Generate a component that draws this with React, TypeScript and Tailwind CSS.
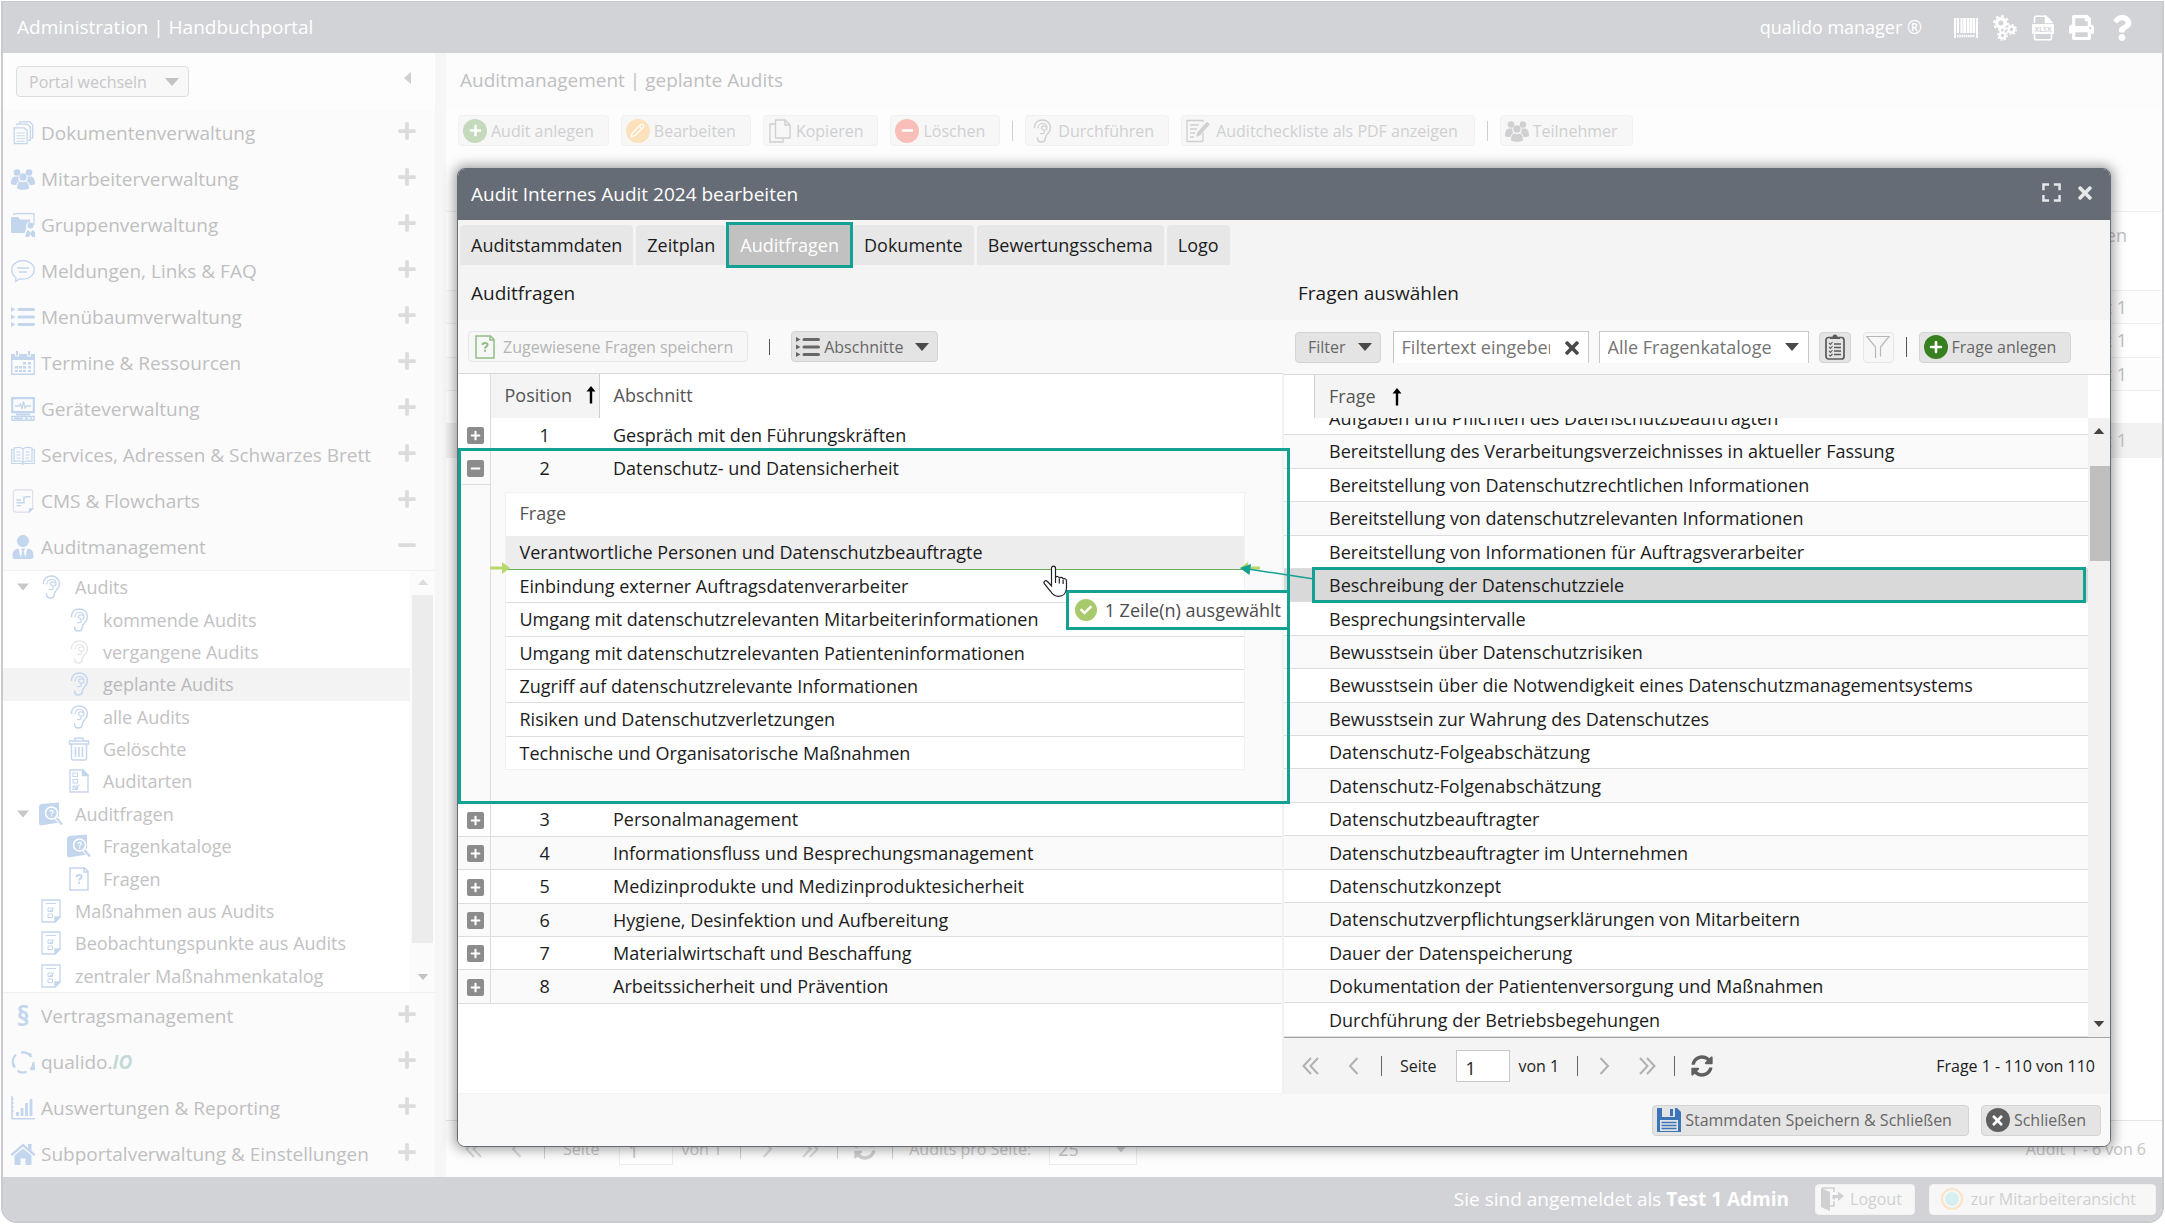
import React from 'react';
import { Pencil } from 'lucide-react';
import { FaUserTie, FaPrint, FaQuestion, FaPlus, FaMinus, FaTimes, FaCheck, FaSyncAlt } from 'react-icons/fa';

type IconProps = { className?: string };

const DocsIcon = ({ className }: IconProps) => (
  <svg viewBox="0 0 24 26" fill="none" stroke="currentColor" strokeWidth="1.4" className={className}>
    <path d="M2.5 7.5h11l3 3v14h-14z" />
    <path d="M5.5 5v-1.700h11l3.500 3v14.700h-2M8.500 2.500V1h11l3 3v14.500h-1.500" />
    <path d="M5 13h9M5 16h9M5 19h9M5 22h9" strokeWidth="1" />
  </svg>
);

const UsersIcon = ({ className }: IconProps) => (
  <svg viewBox="0 0 24 24" fill="currentColor" className={className}>
    <circle cx="6" cy="5.500" r="3.300" />
    <circle cx="18" cy="5.500" r="3.300" />
    <path d="M0 17c0-4 1-7 4-7.500h3.500c-.500 2 0 3.500 1 4.500-1.500.500-2.800 2-3 4C3 18.200 1 17.800 0 17zM24 17c0-4-1-7-4-7.500h-3.500c.500 2 0 3.500-1 4.500 1.500.500 2.800 2 3 4 2.500.200 4.500-.200 5.500-1z" />
    <circle cx="12" cy="10" r="3.700" />
    <path d="M6 21.500c0-4 1-6.500 3.500-7 1.600 1 3.400 1 5 0 2.500.500 3.500 3 3.500 7-3 1.800-9 1.800-12 0z" />
  </svg>
);

const GroupIcon = ({ className }: IconProps) => (
  <svg viewBox="0 0 24 24" fill="currentColor" className={className}>
    <path d="M0 5.500C0 4.700.600 4 1.500 4H7l2 2.500h10V9a4 4 0 0 0-3.500 6l-2 5H1.500C.600 20 0 19.500 0 18.500z" />
    <path d="M3 2V.700h20V12" fill="none" stroke="currentColor" strokeWidth="1.300" />
    <circle cx="19.500" cy="12.500" r="3" />
    <path d="M14.500 24c0-4 1-6.500 3-7l2 3 2-3c2 .500 3 3 3 7h-3.500l-1.500-3-1.500 3z" />
  </svg>
);

const ChatIcon = ({ className }: IconProps) => (
  <svg viewBox="0 0 24 24" fill="none" stroke="currentColor" strokeWidth="1.300" className={className}>
    <path d="M12 1.500C5.700 1.500.700 5.600.700 11c0 3.200 1.700 5.800 4.300 7.500L4.500 22.500l4.500-2.700c1 .200 2 .300 3 .300 6.300 0 11.300-4 11.300-9.300S18.300 1.500 12 1.500z" />
    <path d="M6 9h12M8 13h8" />
  </svg>
);

const ListIcon = ({ className }: IconProps) => (
  <svg viewBox="0 0 24 24" fill="currentColor" className={className}>
    <path d="M0 2l4.500 2.500L0 7zM0 9.500L4.500 12 0 14.500zM0 17l4.500 2.500L0 22z" />
    <path d="M8 4.500h14.500M8 12h14.500M8 19.500h14.500" stroke="currentColor" strokeWidth="3" strokeLinecap="round" />
  </svg>
);

const CalendarIcon = ({ className }: IconProps) => (
  <svg viewBox="0 0 24 24" fill="currentColor" className={className}>
    <path d="M0 3h4v2.500h4V3h8v2.500h4V3h4v6H0z" />
    <path d="M5 0h2v4.500H5zM17 0h2v4.500h-2z" />
    <path d="M.700 8v15.300h22.600V8" fill="none" stroke="currentColor" strokeWidth="1.400" />
    <path d="M12 11h3v2.500h-3zM17 11h3v2.500h-3zM4 15h3v2.500H4zM8 15h3v2.500H8zM12 15h3v2.500h-3zM17 15h3v2.500h-3zM4 19h3v2H4zM8 19h3v2H8zM12 19h3v2h-3zM17 19h3v2h-3z" />
  </svg>
);

const DeviceIcon = ({ className }: IconProps) => (
  <svg viewBox="0 0 24 24" className={className} fill="none" stroke="currentColor">
    <path d="M1.200 1.200h21.600v14H1.200z" strokeWidth="2.200" />
    <path d="M4 9h4l1.500-2 1.500 5 1.500-7.500L14 11l1.500-2H20" strokeWidth="1.300" />
    <path d="M5 17.500h14" strokeWidth="2" />
    <path d="M1 19.500h22v3.800H1z" strokeWidth="1.500" />
    <path d="M3 21.500h9M14 21.500h3M19 21.500h2" strokeWidth="2" />
  </svg>
);

const BookIcon = ({ className }: IconProps) => (
  <svg viewBox="0 0 24 24" className={className} fill="none" stroke="currentColor" strokeWidth="1.200">
    <path d="M12 6c-2-1.700-6-1.700-9-1v13.500c3-.700 7-.700 9 1 2-1.700 6-1.700 9-1V5c-3-.700-7-.700-9 1zM12 6v13" />
    <path d="M3 6.500H.700v14H11l1 .700 1-.700h10.300v-14H21M5.500 9h4M5.500 12h4M5.500 15h4M14.500 9h4M14.500 12h4M14.500 15h4" />
  </svg>
);

const CmsIcon = ({ className }: IconProps) => (
  <svg viewBox="0 0 24 26" className={className} fill="none" stroke="currentColor" strokeWidth="1.200">
    <path d="M4 1h16c1.500 0 2.500 1 2.500 2.500V21l-4 4H4c-1.500 0-2.500-1-2.500-2.500v-19C1.500 2 2.500 1 4 1z" stroke="#dcdcec" />
    <path d="M19 25v-3.500h3.500z" fill="currentColor" />
    <path d="M5 12h5M5 15h6M5 18h5M11 15h2V9h2M15 8.500h5" strokeWidth="1.600" />
  </svg>
);

const CycleIcon = ({ className }: IconProps) => (
  <svg viewBox="0 0 24 24" className={className} fill="none" stroke="currentColor" strokeWidth="2.200">
    <path d="M10 2.500A10 10 0 0 1 20 7M22.500 12a10 10 0 0 1-3 7.500M15.500 21.800A10 10 0 0 1 6.500 21M3.500 17.500A10 10 0 0 1 5 4.500" />
    <path d="M17 3.500l4.500 4L20 3zM24 14.500l-4.500 6 5-.500zM3 13l-2 3 4 2z" fill="currentColor" strokeWidth="0" />
  </svg>
);

const ChartIcon = ({ className }: IconProps) => (
  <svg viewBox="0 0 24 24" className={className} fill="none" stroke="currentColor">
    <path d="M1 0v22.800h23" strokeWidth="1.600" />
    <path d="M1 3h2M1 7h2M1 11h2M1 15h2" strokeWidth="1" />
    <path d="M6.500 20v-4M11 20v-8M15.500 20V7M20 20V3" strokeWidth="2.800" />
  </svg>
);

const HomeIcon = ({ className }: IconProps) => (
  <svg viewBox="0 0 24 24" className={className} fill="currentColor">
    <path d="M1 12.500L12 3l11 9.500" fill="none" stroke="currentColor" strokeWidth="2.400" strokeLinecap="round" />
    <path d="M17 2h3.500v7L17 6zM3.500 13.500L12 6.500l8.500 7V22c0 .600-.400 1-1 1H14.500v-6.500h-5V23h-5c-.600 0-1-.400-1-1z" />
  </svg>
);

const EarIcon = ({ className }: IconProps) => (
  <svg viewBox="0 0 24 24" className={className} fill="none" stroke="currentColor" strokeWidth="1.500" strokeLinecap="round">
    <path d="M4.500 8.500C4.500 3.500 8 1 12.500 1S20.500 4.500 20.500 8.500c0 3-1.300 4.800-3 6.500s-2 2.600-2.200 4.300C15 21.700 13.500 23 11.500 23c-2.200 0-4-1.600-4-4" />
    <path d="M8 9c0-3 2-4.500 4.500-4.500S17 6 17 8.500c0 1.800-1.200 2.500-2 2.500M15.500 7.500c-1.500-1.500-4-.500-4 1.200 0 2 2.800 1.800 2.800 4 0 1.800-2 2.300-3.800 1.800" strokeWidth="1.200" />
  </svg>
);

const TrashIcon = ({ className }: IconProps) => (
  <svg viewBox="0 0 24 24" className={className} fill="none" stroke="currentColor" strokeWidth="1.500">
    <path d="M2.500 4h19v3h-19zM8 4V1.200h8V4M4.500 7v14.500c0 .800.600 1.400 1.300 1.400h12.400c.700 0 1.300-.600 1.300-1.400V7M8.500 10v10M12 10v10M15.500 10v10" />
  </svg>
);

const ChecklistIcon = ({ className }: IconProps) => (
  <svg viewBox="0 0 20 24" className={className} fill="none" stroke="currentColor" strokeWidth="1.400">
    <path d="M1 1h13l5 5v17H1z" />
    <path d="M13.500 1v5.500H19z" fill="currentColor" />
    <path d="M4 4h4.500v3.500H4zM4 10.500h4.500V14H4zM4 17h4.500v3.500H4zM5 18l2 1.500 3.500-4" strokeWidth="1.100" />
  </svg>
);

const CatalogIcon = ({ className }: IconProps) => (
  <svg viewBox="0 0 24 24" className={className} fill="currentColor">
    <path d="M0 4l2-2 18-1.500v20L1.500 23.500 0 22z" />
    <circle cx="12.500" cy="11" r="6" fill="none" stroke="#ffffff" strokeWidth="1.600" />
    <path d="M11 9.800c0-2 3.200-2 3.200 0 0 1.200-1.600 1.200-1.600 2.400M12.600 13.200v1.200" fill="none" stroke="#ffffff" strokeWidth="1.200" />
    <path d="M17 15.500l6 6.500" stroke="#ffffff" strokeWidth="4.500" />
    <path d="M17.500 16l5.500 6.500" stroke="currentColor" strokeWidth="2.200" />
  </svg>
);

const QuestionDocIcon = ({ className }: IconProps) => (
  <svg viewBox="0 0 20 24" className={className} fill="none" stroke="currentColor" strokeWidth="1.500">
    <path d="M1 1h14.500L19 4.500V23H1z" />
    <path d="M15 1v4h4" />
    <path d="M7.500 10c0-2.800 5-2.800 5 0 0 1.600-2.500 1.600-2.500 3.500M10 14.800v1.900" strokeWidth="2" />
  </svg>
);

const TaskDocIcon = ({ className }: IconProps) => (
  <svg viewBox="0 0 20 24" className={className} fill="none" stroke="currentColor" strokeWidth="1.300">
    <path d="M1 1h18v17l-5 5H1z" />
    <path d="M14 23v-5h5z" fill="currentColor" />
    <path d="M5 4.500h10M7 9h4.500v3.500H7zM7 15h4.500v3.500H7zM8.500 10.500l1.500 1.500 3-3.500" strokeWidth="1" />
  </svg>
);

const CopyDocIcon = ({ className }: IconProps) => (
  <svg viewBox="0 0 24 24" className={className} fill="none" stroke="currentColor" strokeWidth="1.400">
    <path d="M7.500 1h9.500l5 5v13H7.500z" />
    <path d="M17 1v5h5M7.500 5H2v18h13v-4" />
  </svg>
);

const EditDocIcon = ({ className }: IconProps) => (
  <svg viewBox="0 0 24 24" className={className} fill="none" stroke="currentColor" strokeWidth="1.400">
    <path d="M17 3V1.500H1v21h15l1-1V14" />
    <path d="M4 6h9M4 10h7M4 14h5M4 18h4" />
    <path d="M10.500 17.500l1-4L21 3l2.500 2.300L14 16z" fill="currentColor" strokeWidth=".6" />
  </svg>
);

const BarcodeIcon = ({ className }: IconProps) => (
  <svg viewBox="0 0 24 20" className={className} fill="none" stroke="currentColor">
    <path d="M1 0v20M23 0v20M4 0v15M7.500 0v15M14 0v15M20 0v15" strokeWidth="2.200" />
    <path d="M10.700 0v15M17 0v15" strokeWidth="3" />
    <path d="M3 18h18" strokeWidth="2.600" strokeDasharray="1.600 .6" />
  </svg>
);

const GearsIcon = ({ className }: IconProps) => (
  <svg viewBox="0 0 24 26" className={className} fill="none" stroke="currentColor">
    <circle cx="8" cy="8" r="4.300" strokeWidth="3.600" />
    <circle cx="8" cy="8" r="7" strokeWidth="2" strokeDasharray="2.750 2.750" />
    <circle cx="18.500" cy="14.500" r="3" strokeWidth="2.400" />
    <circle cx="18.500" cy="14.500" r="4.800" strokeWidth="1.500" strokeDasharray="1.880 1.880" />
    <circle cx="9.500" cy="20.500" r="2.900" strokeWidth="2.400" />
    <circle cx="9.500" cy="20.500" r="4.700" strokeWidth="1.500" strokeDasharray="1.840 1.840" />
  </svg>
);

const XlsxIcon = ({ className }: IconProps) => (
  <svg viewBox="0 0 22 26" className={className} fill="none" stroke="currentColor" strokeWidth="1.500">
    <path d="M2.500 8V3c0-1 .700-1.800 1.700-1.800H14L19.500 7v1M2.500 19v4c0 1 .700 1.800 1.700 1.800h13.600c1 0 1.700-.800 1.700-1.800v-4" />
    <path d="M13.500 1v6.500h6z" fill="currentColor" />
    <rect x="0" y="9" width="22" height="10" rx="1" fill="currentColor" strokeWidth="0" />
    <text x="11" y="16.800" textAnchor="middle" fontSize="7" fontWeight="700" fill="#d2d3d7" strokeWidth="0" fontFamily="Open Sans, sans-serif">XLSX</text>
  </svg>
);

const ClipboardIcon = ({ className }: IconProps) => (
  <svg viewBox="0 0 20 26" className={className} fill="none" stroke="currentColor" strokeWidth="1.700">
    <rect x="1" y="3.500" width="18" height="21.500" rx="2.500" />
    <path d="M5 5V3h2.500C7.500 1.500 8.500.500 10 .500S12.500 1.500 12.500 3H15v2z" fill="currentColor" strokeWidth="0" />
    <path d="M9 10h7M9 13.500h7M9 17h7M9 20.500h7" strokeWidth="1.300" />
    <path d="M4 9l1.500 1.500L7.500 8M4 13l1.500 1.500L7.500 12M4 17l1.500 1.500L7.500 16M4 21l1.500 1L7.500 20" strokeWidth="1.100" />
  </svg>
);

const FunnelIcon = ({ className }: IconProps) => (
  <svg viewBox="0 0 24 24" className={className} fill="none" stroke="currentColor" strokeWidth="1.200">
    <path d="M9.500 23V12L.800 1.500h22.400L14.500 12v9.500" />
  </svg>
);

const SaveIcon = ({ className }: IconProps) => (
  <svg viewBox="0 0 24 24" className={className}>
    <path d="M0 0h20l4 4v20H0z" fill="#3b74b9" />
    <path d="M5 0h13v9H5z" fill="#e4e4e4" />
    <path d="M13 1h3v7h-3z" fill="#3b74b9" />
    <path d="M3 12h18v11H3z" fill="#e4e4e4" />
    <path d="M4.500 14.500h15M4.500 17.500h15M4.500 20.500h15" stroke="#3b74b9" strokeWidth="1.300" />
  </svg>
);

const LogoutIcon = ({ className }: IconProps) => (
  <svg viewBox="0 0 24 24" className={className} fill="currentColor">
    <path d="M1 1l9 4v19l-9-4z" />
    <path d="M2 1h12v4M14 14v5h-4" fill="none" stroke="currentColor" strokeWidth="1.600" />
    <path d="M12.500 12V8H18V4.500L24 9l-6 5v-3h-3v1.500z" />
  </svg>
);

const FullscreenIcon = ({ className }: IconProps) => (
  <svg viewBox="0 0 20 20" className={className} fill="none" stroke="currentColor" strokeWidth="2.600">
    <path d="M1.500 7.500v-6h6M12.500 1.500h6v6M18.500 12.500v6h-6M7.500 18.500h-6v-6" />
  </svg>
);

const SortUpIcon = ({ className }: IconProps) => (
  <svg viewBox="0 0 10 18" className={className} fill="currentColor">
    <path d="M5 0l4.500 5.500H6.200V17.500H3.800V5.500H.500z" />
  </svg>
);

const HandIcon = ({ className }: IconProps) => (
  <svg viewBox="0 0 25 32" className={className} fill="#ffffff" stroke="#1f1f2b" strokeWidth="1.200">
    <path d="M8.500 21V3.200c0-2.800 4-2.800 4 0V13c.300-2.200 3.800-2 3.800.500.500-1.800 3.800-1.500 3.800.800.600-1.300 3.400-.800 3.400 1.500v7c0 5-3 8.500-8 8.500-4 0-6-1.700-8-5L1.500 19c-1.500-2.500 1-4.300 3-2.500z" />
    <path d="M12.500 13v5M16.300 14v4.500M20.100 15v4" />
  </svg>
);

const InsertArrow = ({ className }: IconProps) => (
  <svg viewBox="0 0 20 12" className={className} fill="currentColor"><path d="M0 4.500h12V0l8 6-8 6V7.500H0z" /></svg>
);

// round badge that carries a glyph
const Badge = ({ className, children }: { className: string; children: React.ReactNode }) => (
  <span className={`flex shrink-0 items-center justify-center rounded-full ${className}`}>{children}</span>
);

const Caret = ({ className }: IconProps) => (
  <svg viewBox="0 0 14 8" className={className} fill="currentColor"><path d="M0 0h14L7 8z" /></svg>
);

const Chevron = ({ double, flip }: { double?: boolean; flip?: boolean }) => (
  <svg viewBox="0 0 17 18" className={`h-[18px] w-[17px] ${flip ? 'rotate-180' : ''}`} fill="none" stroke="currentColor" strokeWidth="2">
    {double ? <path d="M9 1L1.500 9 9 17M16 1L8.500 9l7.500 8" /> : <path d="M12.500 1L5 9l7.500 8" />}
  </svg>
);

const Separator = ({ className }: IconProps) => <span className={`w-px shrink-0 ${className ?? 'h-5 bg-[#d0d0d2]'}`} />;

type BtnProps = { icon?: React.ReactNode; children?: React.ReactNode; className?: string; label?: string };

// faded button of the page behind the window
const MutedButton = ({ icon, children, className = 'gap-1 pl-1 pr-3.5' }: BtnProps) => (
  <button className={`flex h-[31px] shrink-0 items-center rounded-[4px] border border-[#f1f1f2] bg-[#f7f7f7] text-[16px] text-[#d0d0d2] ${className}`}>
    {icon}
    {children}
  </button>
);

const ToolButton = ({ icon, children, className = 'pl-1 pr-3.5', label }: BtnProps) => (
  <button aria-label={label} className={`flex h-[31px] shrink-0 items-center gap-1 rounded-[4px] border border-[#d3d3d3] bg-[#e4e4e4] text-[16px] text-[#676767] ${className}`}>
    {icon}
    {children}
  </button>
);

const menuTop = [
  { label: 'Dokumentenverwaltung', icon: DocsIcon },
  { label: 'Mitarbeiterverwaltung', icon: UsersIcon },
  { label: 'Gruppenverwaltung', icon: GroupIcon },
  { label: 'Meldungen, Links & FAQ', icon: ChatIcon },
  { label: 'Menübaumverwaltung', icon: ListIcon },
  { label: 'Termine & Ressourcen', icon: CalendarIcon },
  { label: 'Geräteverwaltung', icon: DeviceIcon },
  { label: 'Services, Adressen & Schwarzes Brett', icon: BookIcon },
  { label: 'CMS & Flowcharts', icon: CmsIcon },
  { label: 'Auditmanagement', icon: FaUserTie, open: true },
];

const SectionSign = () => <span className="w-6 text-center text-[26px] font-bold leading-6 text-[#c3d6ee]">§</span>;

const menuBottom = [
  { label: 'Vertragsmanagement', icon: SectionSign },
  { label: 'qualido.', suffix: 'IO', icon: CycleIcon },
  { label: 'Auswertungen & Reporting', icon: ChartIcon },
  { label: 'Subportalverwaltung & Einstellungen', icon: HomeIcon },
];

const tree = [
  { label: 'Audits', level: 1, icon: EarIcon, open: true },
  { label: 'kommende Audits', level: 2, icon: EarIcon },
  { label: 'vergangene Audits', level: 2, icon: EarIcon, grey: true },
  { label: 'geplante Audits', level: 2, icon: EarIcon, active: true },
  { label: 'alle Audits', level: 2, icon: EarIcon },
  { label: 'Gelöschte', level: 2, icon: TrashIcon },
  { label: 'Auditarten', level: 2, icon: ChecklistIcon },
  { label: 'Auditfragen', level: 1, icon: CatalogIcon, open: true },
  { label: 'Fragenkataloge', level: 2, icon: CatalogIcon },
  { label: 'Fragen', level: 2, icon: QuestionDocIcon },
  { label: 'Maßnahmen aus Audits', level: 1, icon: TaskDocIcon },
  { label: 'Beobachtungspunkte aus Audits', level: 1, icon: TaskDocIcon },
  { label: 'zentraler Maßnahmenkatalog', level: 1, icon: TaskDocIcon },
];

const sections = [
  'Personalmanagement',
  'Informationsfluss und Besprechungsmanagement',
  'Medizinprodukte und Medizinproduktesicherheit',
  'Hygiene, Desinfektion und Aufbereitung',
  'Materialwirtschaft und Beschaffung',
  'Arbeitssicherheit und Prävention',
];

const sectionQuestions = [
  'Verantwortliche Personen und Datenschutzbeauftragte',
  'Einbindung externer Auftragsdatenverarbeiter',
  'Umgang mit datenschutzrelevanten Mitarbeiterinformationen',
  'Umgang mit datenschutzrelevanten Patienteninformationen',
  'Zugriff auf datenschutzrelevante Informationen',
  'Risiken und Datenschutzverletzungen',
  'Technische und Organisatorische Maßnahmen',
];

const questions = [
  'Aufgaben und Pflichten des Datenschutzbeauftragten',
  'Bereitstellung des Verarbeitungsverzeichnisses in aktueller Fassung',
  'Bereitstellung von Datenschutzrechtlichen Informationen',
  'Bereitstellung von datenschutzrelevanten Informationen',
  'Bereitstellung von Informationen für Auftragsverarbeiter',
  'Beschreibung der Datenschutzziele',
  'Besprechungsintervalle',
  'Bewusstsein über Datenschutzrisiken',
  'Bewusstsein über die Notwendigkeit eines Datenschutzmanagementsystems',
  'Bewusstsein zur Wahrung des Datenschutzes',
  'Datenschutz-Folgeabschätzung',
  'Datenschutz-Folgenabschätzung',
  'Datenschutzbeauftragter',
  'Datenschutzbeauftragter im Unternehmen',
  'Datenschutzkonzept',
  'Datenschutzverpflichtungserklärungen von Mitarbeitern',
  'Dauer der Datenspeicherung',
  'Dokumentation der Patientenversorgung und Maßnahmen',
  'Durchführung der Betriebsbegehungen',
];

type MenuEntry = { label: string; icon: React.ComponentType<{ className?: string }>; open?: boolean; suffix?: string };

const MenuItem = ({ item }: { item: MenuEntry }) => {
  const Icon = item.icon;
  return (
    <button className="flex h-[46px] w-full items-center pl-2 pr-[18px] text-left text-[19px] text-[#bfbfc1]">
      <Icon className="h-6 w-6 shrink-0 text-[#c3d6ee]" />
      <span className="ml-1.5 flex-1 whitespace-nowrap">
        {item.label}
        {item.suffix && <em className="font-bold text-[#c3dad8]">{item.suffix}</em>}
      </span>
      <span className="mb-1 text-[#dcdcdd]">{item.open ? <FaMinus size={20} /> : <FaPlus size={20} />}</span>
    </button>
  );
};

const Sidebar = () => (
  <aside className="flex w-[432px] shrink-0 flex-col bg-[#fbfbfb]">
    <div className="flex h-[58px] items-start justify-between bg-[#fdfdfd] pl-[13px] pr-6 pt-[13px]">
      <button className="flex h-[31px] items-center gap-[18px] rounded-[4px] border border-[#dededf] bg-[#f8f8f8] pl-3 pr-[9px] text-[16px] text-[#c6c6c8]">
        Portal wechseln
        <Caret className="h-2 w-3.5 text-[#c2c2c4]" />
      </button>
      <button aria-label="Navigation einklappen" className="mt-1.5 text-[#cfcfd1]">
        <svg viewBox="0 0 7 12" className="h-3 w-[7px]" fill="currentColor"><path d="M7 0v12L0 6z" /></svg>
      </button>
    </div>
    <nav>
      {menuTop.map((item) => <MenuItem key={item.label} item={item} />)}
      <div className="flex border-y border-[#f0f0f0] bg-white">
        <ul className="grid h-[421px] flex-1 auto-rows-fr">
          {tree.map(({ label, level, icon: Icon, open, active, grey }) => (
            <li key={label} className={`flex items-center ${active ? 'bg-[#f3f3f3]' : ''}`}>
              <span className="flex w-9 shrink-0 pl-3.5 text-[#c9c9cb]">{open && <Caret className="h-2 w-3" />}</span>
              <span className={`flex w-6 shrink-0 justify-center ${level === 2 ? 'ml-7' : ''} ${grey ? 'text-[#e6e6e8]' : 'text-[#c3d6ee]'}`}>
                <Icon className="h-6 w-6" />
              </span>
              <a href="#" className={`ml-3 whitespace-nowrap text-[18px] leading-6 ${active ? 'text-[#b9b9bb]' : 'text-[#c2c2c4]'}`}>{label}</a>
            </li>
          ))}
        </ul>
        <div className="flex w-[25px] flex-col items-center bg-[#fbfbfb] py-2">
          <Caret className="h-1.5 w-3 rotate-180 text-[#dedee0]" />
          <span className="mt-2.5 h-[348px] w-[21px] bg-[#ececec]" />
          <Caret className="mt-auto mb-1 h-1.5 w-3 text-[#c2c2c4]" />
        </div>
      </div>
      {menuBottom.map((item) => <MenuItem key={item.label} item={item} />)}
    </nav>
  </aside>
);

const Pager = ({ muted }: { muted?: boolean }) => {
  const line = muted ? 'h-5 bg-[#d0d0d2]' : 'h-5 bg-[#666666]';
  return (
    <div className={`flex items-center text-[16px] ${muted ? 'text-[#c6c6c8]' : 'text-[#222222]'}`}>
      <div className={`flex items-center ${muted ? 'text-[#dadadc]' : 'text-[#b0b0b0]'}`}>
        <button aria-label="Erste Seite"><Chevron double /></button>
        <button aria-label="Vorherige Seite" className="ml-[26px]"><Chevron /></button>
      </div>
      <Separator className={`ml-[19px] ${line}`} />
      <label className="ml-[18px] flex items-center">
        Seite
        <input
          defaultValue="1"
          className={`ml-5 h-8 w-[54px] border bg-white px-2 pt-1 text-[18px] ${muted ? 'border-[#ececed]' : 'border-[#c8c8c8]'}`}
        />
      </label>
      <span className="ml-2">von 1</span>
      <Separator className={`ml-[18px] ${line}`} />
      <div className={`flex items-center ${muted ? 'text-[#dadadc]' : 'text-[#b0b0b0]'}`}>
        <button aria-label="Nächste Seite" className="ml-[18px]"><Chevron flip /></button>
        <button aria-label="Letzte Seite" className="ml-[26px]"><Chevron double flip /></button>
      </div>
      <Separator className={`ml-[18px] ${line}`} />
      <button aria-label="Aktualisieren" className={`ml-4 ${muted ? 'text-[#d0d0d2]' : 'text-[#5f5f5f]'}`}><FaSyncAlt size={22} /></button>
      {muted && (
        <>
          <Separator className={`ml-4 ${line}`} />
          <label className="ml-4 flex items-center">
            Audits pro Seite:
            <span className="relative ml-[18px] flex items-center">
              <select className="h-8 w-[88px] appearance-none border border-[#ececed] bg-white px-2 text-[18px]">
                <option>25</option>
              </select>
              <Caret className="pointer-events-none absolute right-2.5 h-2 w-3 text-[#d0d0d2]" />
            </span>
          </label>
        </>
      )}
    </div>
  );
};

// only the right edge of this table shows next to the window
const auditRows = [
  { text: 'Test 1', style: 'h-[33px] bg-[#fdfdfd]' },
  { text: 'Test 1', style: 'h-[34px]' },
  { text: 'Test 1', style: 'h-[33px] bg-[#fdfdfd]' },
  { text: '', style: 'h-[33px]' },
  { text: 'Test 1', style: 'h-[34px] bg-[#f2f2f2]' },
];

const AuditPage = () => (
  <main className="flex min-w-0 flex-1 flex-col bg-white">
    <h1 className="flex h-[54px] shrink-0 items-center bg-[#fcfcfc] pl-3.5 text-[19px] text-[#bfbfc1]">Auditmanagement | geplante Audits</h1>
    <div className="flex h-[105px] shrink-0 items-start gap-3 border-b border-[#f0f0f0] bg-[#fdfdfd] pl-3 pt-2">
      <MutedButton icon={<Badge className="h-6 w-6 bg-[#c5dabd] text-white"><FaPlus size={13} /></Badge>}>Audit anlegen</MutedButton>
      <MutedButton icon={<Badge className="h-6 w-6 bg-[#fbe2bd] text-white"><Pencil size={15} /></Badge>}>Bearbeiten</MutedButton>
      <MutedButton icon={<CopyDocIcon className="h-6 w-6" />}>Kopieren</MutedButton>
      <MutedButton icon={<Badge className="h-6 w-6 bg-[#f8beb7] text-white"><FaMinus size={13} /></Badge>}>Löschen</MutedButton>
      <Separator className="mt-1.5 h-5 bg-[#d0d0d2]" />
      <MutedButton icon={<EarIcon className="h-6 w-6" />}>Durchführen</MutedButton>
      <MutedButton className="gap-1.5 pl-1 pr-4" icon={<EditDocIcon className="h-6 w-6" />}>Auditcheckliste als PDF anzeigen</MutedButton>
      <Separator className="mt-1.5 h-5 bg-[#d0d0d2]" />
      <MutedButton icon={<UsersIcon className="h-6 w-6" />}>Teilnehmer</MutedButton>
    </div>
    <table className="w-full text-right text-[18px] text-[#bfbfc1]">
      <thead>
        <tr className="h-[78px] border-b border-[#f0f0f0] align-top">
          <th className="pr-[35px] pt-2.5 font-normal">Fragen</th>
        </tr>
      </thead>
      <tbody>
        {auditRows.map((row, i) => (
          <tr key={i} className={`border-b border-[#f0f0f0] ${row.style}`}>
            <td className="py-0 pr-[35px] leading-6">{row.text}</td>
          </tr>
        ))}
      </tbody>
    </table>
    <div className="mt-auto flex h-[57px] shrink-0 items-center justify-between border-t border-[#e4e4e5] bg-[#fdfdfd] pl-[19px] pr-4">
      <Pager muted />
      <span className="text-[16px] text-[#c6c6c8]">Audit 1 - 6 von 6</span>
    </div>
  </main>
);

const Expander = ({ open }: { open?: boolean }) => (
  <button aria-label={open ? 'Zuklappen' : 'Aufklappen'} className="mt-0.5 flex h-[17px] w-[17px] items-center justify-center rounded-[2px] bg-[#8c8c8c] text-white">
    {open ? <FaMinus size={11} /> : <FaPlus size={11} />}
  </button>
);

const SectionRow = ({ pos, title, open, style }: { pos: number; title: string; open?: boolean; style: string }) => (
  <tr className={style}>
    <td className={`w-8 border-r border-[#dddddd] p-0 pl-[9px] ${open ? 'border-b' : ''}`}><Expander open={open} /></td>
    <td className="w-[109px] p-0 text-center">{pos}</td>
    <td className="p-0 pl-3.5">{title}</td>
  </tr>
);

const QuestionDropZone = () => (
  <div className="relative ml-3.5 mr-[37px] mt-2 border border-[#f1f1f1] bg-white">
    <table className="w-full">
      <thead>
        <tr className="h-[43px]"><th className="p-0 pb-1 pl-3.5 text-left font-normal text-[#555555]">Frage</th></tr>
      </thead>
      <tbody>
        {sectionQuestions.map((q, i) => (
          <tr key={q} className={i === 0 ? 'h-[33px] border-b border-[#6cae5c] bg-[#ededed]' : 'h-[33px] border-b border-[#dddddd] last:border-b-0 nth-[3n]:h-[34px]'}>
            <td className="p-0 pl-3.5">{q}</td>
          </tr>
        ))}
      </tbody>
    </table>
    <InsertArrow className="absolute -left-4 top-[69px] h-3 w-5 text-[#b8d86b]" />
    <InsertArrow className="absolute -right-4 top-[69px] h-3 w-5 rotate-180 text-[#b8d86b]" />
    <svg viewBox="0 0 74 20" className="absolute -right-[70px] top-[70px] z-20 h-5 w-[74px]">
      <path d="M8 6l66 10" stroke="#12a193" strokeWidth="1.500" />
      <path d="M0 5l11-4-1.500 11z" fill="#12a193" />
    </svg>
    <HandIcon className="absolute right-[176px] top-[72px] z-20 h-8 w-[25px]" />
    <div className="absolute -right-[46px] top-[97px] z-10 flex h-10 items-center gap-2 whitespace-nowrap border-[3px] border-[#12a193] bg-white px-1.5 text-[18px] text-[#4c4c4c]">
      <Badge className="h-[22px] w-[22px] bg-[#a9ca6c] text-white"><FaCheck size={12} /></Badge>
      1 Zeile(n) ausgewählt
    </div>
  </div>
);

const AssignedPanel = () => (
  <section className="flex min-w-0 flex-col">
    <h3 className="flex h-[54px] items-center pl-[13px] text-[19px]">Auditfragen</h3>
    <div className="flex h-[53px] items-center bg-[#f9f9f9] pl-2.5">
      <button disabled className="flex h-[31px] items-center gap-2 rounded-[4px] border border-[#e6e6e6] bg-[#f7f7f7] pl-1.5 pr-3.5 text-[16px] text-[#b4b4b4]">
        <QuestionDocIcon className="h-6 w-5 text-[#93bd86]" />
        Zugewiesene Fragen speichern
      </button>
      <Separator className="mx-[21px] h-4 bg-[#555555]" />
      <ToolButton className="pl-1 pr-2" icon={<ListIcon className="h-6 w-6" />}>
        Abschnitte
        <Caret className="ml-2 h-2 w-3.5 text-[#4a4a4a]" />
      </ToolButton>
    </div>
    <div className="relative flex-1 border-b border-r-2 border-t border-[#d9d9d9] border-b-[#f2f2f2] border-r-[#f2f2f2] bg-white">
      <table className="w-full leading-6">
        <thead>
          <tr className="h-11 text-left text-[#555555]">
            <th className="w-8 border-r border-[#dddddd] p-0" />
            <th className="border-r border-[#d0d0d0] bg-[#f4f4f4] p-0 pb-0.5 pl-3.5 font-normal">
              <span className="flex items-center justify-between pr-0.5">Position <SortUpIcon className="mr-px h-[18px] w-2.5 text-black" /></span>
            </th>
            <th className="p-0 pb-0.5 pl-3.5 font-normal">Abschnitt</th>
          </tr>
        </thead>
        <tbody>
          <SectionRow pos={1} title="Gespräch mit den Führungskräften" style="h-[33px]" />
          <SectionRow pos={2} title="Datenschutz- und Datensicherheit" style="h-[33px] bg-[#fafafa]" open />
          <tr className="h-[319px] bg-[#fafafa] align-top">
            <td className="border-r border-[#dddddd] p-0" />
            <td colSpan={2} className="p-0"><QuestionDropZone /></td>
          </tr>
        </tbody>
        <tbody>
          {sections.map((title, i) => (
            <SectionRow key={title} pos={i + 3} title={title} style="h-[33px] border-b border-[#dddddd] even:bg-[#fafafa] nth-[3n]:h-[34px]" />
          ))}
        </tbody>
      </table>
      <div className="pointer-events-none absolute -right-2 left-0 top-[74px] z-10 h-[356px] border-[3px] border-[#12a193]" />
    </div>
  </section>
);

const SelectPanel = () => (
  <section className="flex min-w-0 flex-col">
    <h3 className="flex h-[54px] items-center pl-3.5 text-[19px]">Fragen auswählen</h3>
    <div className="flex h-[54px] items-center gap-2.5 bg-[#f9f9f9] pl-[11px]">
      <ToolButton className="mr-0.5 pl-3 pr-2">
        Filter
        <Caret className="ml-2 h-2 w-3.5 text-[#4a4a4a]" />
      </ToolButton>
      <div className="flex h-8 w-[196px] items-center border border-b-0 border-[#c8c8c8] bg-white pl-2 pr-1.5">
        <input aria-label="Filtertext" placeholder="Filtertext eingeben" className="w-[148px] min-w-0 text-[18px] outline-none placeholder:text-[#757575]" />
        <button aria-label="Filter leeren" className="ml-auto text-[#4a4a4a]"><FaTimes size={20} /></button>
      </div>
      <div className="relative flex h-8 w-[210px] items-center">
        <select aria-label="Fragenkatalog" className="h-8 w-full appearance-none border border-b-0 border-[#c8c8c8] bg-white pl-2 pr-9 text-[18px] text-[#757575]">
          <option>Alle Fragenkataloge</option>
        </select>
        <Caret className="pointer-events-none absolute right-2.5 h-2 w-3.5 text-[#4a4a4a]" />
      </div>
      <div className="flex items-center gap-3">
        <ToolButton label="Nur ausgewählte" className="px-[5px]" icon={<ClipboardIcon className="h-[26px] w-5 text-[#5a5a5a]" />} />
        <button aria-label="Filter" className="flex h-[31px] w-[31px] items-center justify-center rounded-[4px] border border-[#e6e6e6] bg-[#f7f7f7] text-[#b8b8b8]">
          <FunnelIcon className="h-6 w-6" />
        </button>
        <Separator className="h-5 bg-[#555555]" />
        <ToolButton icon={<Badge className="h-6 w-6 bg-[#36801f] text-white"><FaPlus size={14} /></Badge>}>Frage anlegen</ToolButton>
      </div>
    </div>
    <div className="flex h-11 shrink-0 border-t border-[#d9d9d9] bg-white text-[#555555]">
      <div className="ml-[30px] mr-[22px] flex flex-1 items-center gap-4 border-l border-[#d0d0d0] bg-[#f4f4f4] pl-3.5">
        Frage <SortUpIcon className="h-[18px] w-2.5 text-black" />
      </div>
    </div>
    <div className="flex h-[620px] border-b border-[#a5a5a5] bg-white">
      <div className="flex min-w-0 flex-1 flex-col justify-end overflow-hidden">
        <table className="h-[635px] w-full shrink-0 leading-6">
          <tbody>
            {questions.map((q) => {
              const active = q === 'Beschreibung der Datenschutzziele';
              return (
                <tr key={q} className={`border-b border-[#dddddd] ${active ? 'bg-[#d9d9d9]' : 'even:bg-[#fafafa]'}`}>
                  <td className="relative p-0 pl-[45px]">
                    {q}
                    {active && <span className="absolute -bottom-0.5 -top-0.5 left-7 right-0.5 border-[3px] border-[#12a193]" />}
                  </td>
                </tr>
              );
            })}
          </tbody>
        </table>
      </div>
      <div className="flex w-[22px] flex-col items-center bg-[#f1f1f1] py-2.5">
        <Caret className="h-1.5 w-3 rotate-180 text-[#444444]" />
        <span className="ml-px mt-8 h-[95px] w-5 bg-[#bfbfbf]" />
        <Caret className="mt-auto h-1.5 w-3 text-[#444444]" />
      </div>
    </div>
    <div className="flex h-14 items-center justify-between pl-[18px] pr-[15px]">
      <Pager />
      <span className="text-[16px]">Frage 1 - 110 von 110</span>
    </div>
  </section>
);

const tabs = ['Auditstammdaten', 'Zeitplan', 'Auditfragen', 'Dokumente', 'Bewertungsschema', 'Logo'];

const AuditDialog = () => (
  <div role="dialog" aria-label="Audit bearbeiten" className="absolute bottom-[77px] left-[457px] right-[54px] top-[168px] z-10 flex flex-col overflow-hidden rounded-lg border border-[#666c76] bg-[#f4f4f4] text-[18px] text-[#1c1c1c] shadow-[0_0_12px_3px_rgba(0,0,0,0.35)]">
    <header className="flex h-[51px] shrink-0 items-center bg-[#666c76] pl-[13px] pr-[15px] text-white">
      <h2 className="flex-1 text-[19px] font-medium">Audit Internes Audit 2024 bearbeiten</h2>
      <button aria-label="Maximieren" className="mb-1 text-[#e6e7e9]"><FullscreenIcon className="h-[19px] w-[19px]" /></button>
      <button aria-label="Fenster schließen" className="mb-1 ml-3.5 text-[#e6e7e9]"><FaTimes size={20} /></button>
    </header>
    <div role="tablist" className="flex h-[46px] shrink-0 gap-[3px] pl-0.5 pt-[5px]">
      {tabs.map((tab) => {
        const active = tab === 'Auditfragen';
        return (
          <button
            key={tab}
            role="tab"
            aria-selected={active}
            className={`h-10 px-[11px] ${active ? 'bg-[#c1c1c1] font-medium text-white outline-[3px] outline-[#12a193]' : 'rounded-t-[4px] bg-[#e7e7e7]'}`}
          >
            {tab}
          </button>
        );
      })}
    </div>
    <div className="grid min-h-0 flex-1 grid-cols-2">
      <AssignedPanel />
      <SelectPanel />
    </div>
    <footer className="flex h-[52px] shrink-0 items-center justify-end gap-3 bg-[#f9f9f9] pr-[9px]">
      <ToolButton className="pl-1 pr-4" icon={<SaveIcon className="h-6 w-6" />}>Stammdaten Speichern &amp; Schließen</ToolButton>
      <ToolButton icon={<Badge className="h-6 w-6 bg-[#5f5f5f] text-white"><FaTimes size={15} /></Badge>}>Schließen</ToolButton>
    </footer>
  </div>
);

const App = () => (
  <div className="relative h-screen bg-white p-px font-['Open_Sans',sans-serif]">
    <div className="flex h-full flex-col overflow-hidden rounded-b-2xl border-2 border-t border-[#c9cacd]">
      <header className="flex h-[51px] shrink-0 items-center bg-[#d2d3d7] pl-3.5 pr-[27px] text-[18px] text-white">
        <p className="flex-1 text-[19px] font-medium">Administration | Handbuchportal</p>
        <p className="mr-8">qualido manager ®</p>
        <div className="flex items-center gap-[15px]">
          <button aria-label="Barcode"><BarcodeIcon className="h-5 w-6" /></button>
          <button aria-label="Einstellungen"><GearsIcon className="h-[26px] w-6" /></button>
          <button aria-label="Excel-Export"><XlsxIcon className="h-[26px] w-[22px]" /></button>
          <button aria-label="Drucken"><FaPrint size={25} /></button>
          <button aria-label="Hilfe"><FaQuestion size={26} /></button>
        </div>
      </header>
      <div className="flex min-h-0 flex-1">
        <Sidebar />
        <div className="w-[11px] shrink-0 bg-[#f6f6f7]" />
        <AuditPage />
      </div>
      <footer className="flex h-11 shrink-0 items-center justify-end bg-[#d2d3d7] pr-1.5 text-[19px] text-white">
        <p className="mr-[26px] font-medium">Sie sind angemeldet als <b>Test 1 Admin</b></p>
        <MutedButton className="gap-1.5 pl-1 pr-3" icon={<LogoutIcon className="h-6 w-6" />}>Logout</MutedButton>
        <MutedButton
          className="ml-3.5 gap-2 pl-[11px] pr-[19px]"
          icon={<Badge className="h-[22px] w-[22px] border-2 border-[#fbe4c4]"><span className="h-3.5 w-3.5 rounded-full bg-[#d8eff0]" /></Badge>}
        >
          zur Mitarbeiteransicht
        </MutedButton>
      </footer>
    </div>
    <AuditDialog />
  </div>
);

export default App;
